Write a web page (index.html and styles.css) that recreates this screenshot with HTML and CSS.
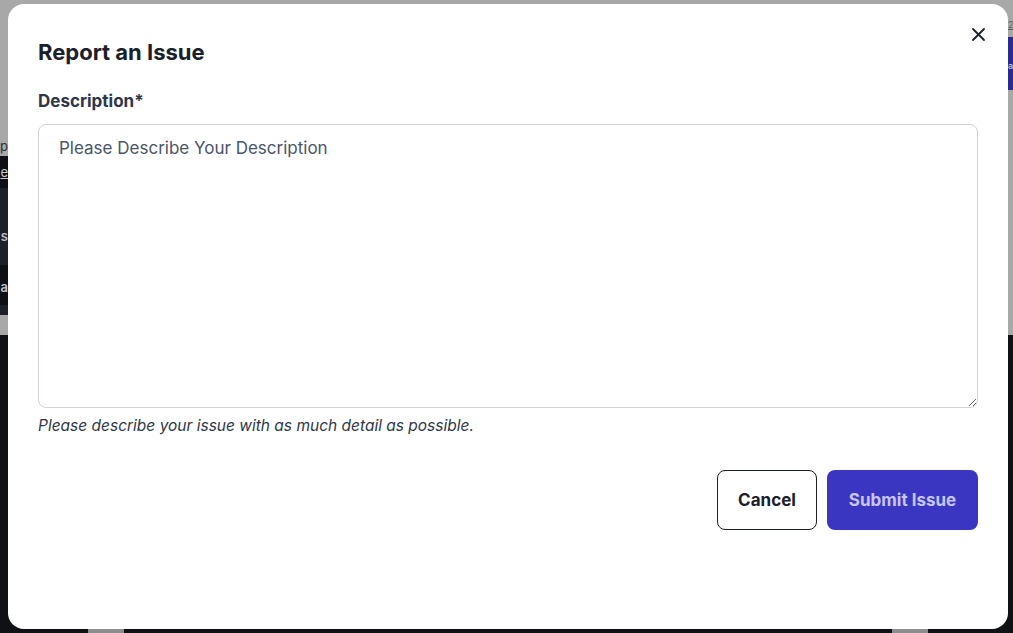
FILE: index.html
```html
<!DOCTYPE html>
<html lang="en">
<head>
  <meta charset="UTF-8">
  <meta name="viewport" content="width=device-width, initial-scale=1.0">
  <title>Report an Issue</title>
  <link rel="stylesheet" href="styles.css">
</head>
<body>
  <div class="page">
    <div class="page-top">
      <div class="edge-left">
        <div class="edge-gray"><span class="edge-text">p</span></div>
        <div class="band band-dark"><span class="edge-text link">e</span></div>
        <div class="band band-mid"><span class="edge-text light">s</span></div>
        <div class="band band-dark tall"><span class="edge-text light">a</span></div>
        <div class="band band-mid thin"></div>
      </div>
      <div class="edge-right">
        <div class="edge-gray-top"><span class="edge-text-r link-dark">2</span></div>
        <div class="band-indigo"><span class="edge-text-r light">a</span></div>
      </div>
    </div>
    <div class="page-bottom">
      <div class="bottom-strip">
        <span class="strip-bar"></span>
        <span class="strip-bar"></span>
      </div>
    </div>
  </div>

  <div class="modal">
    <button class="close-btn" type="button" aria-label="Close">
      <svg width="13" height="13" viewBox="0 0 13 13" fill="none" stroke="#1a202c" stroke-width="1.8" stroke-linecap="round">
        <path d="M1 1 L12 12 M12 1 L1 12"/>
      </svg>
    </button>

    <h2 class="modal-title">Report an Issue</h2>

    <form class="issue-form">
      <label for="description">Description*</label>
      <textarea id="description" placeholder="Please Describe Your Description"></textarea>
      <p class="hint">Please describe your issue with as much detail as possible.</p>

      <div class="actions">
        <button type="button" class="btn btn-cancel">Cancel</button>
        <button type="submit" class="btn btn-submit">Submit Issue</button>
      </div>
    </form>
  </div>
</body>
</html>
```

FILE: styles.css
```css
* {
  box-sizing: border-box;
}
body {
  margin: 0;
  font-family: Inter, "Noto Sans", "Liberation Sans", sans-serif;
  background: #0f1115;
  overflow: hidden;
}

/* dimmed page behind the dialog */
.page {
  height: 633px;
  display: flex;
  flex-direction: column;
}
.page-top {
  height: 335px;
  background: #a8a8a8;
  display: flex;
  justify-content: space-between;
}
.page-bottom {
  flex: 1;
  background: #0f1115;
  display: flex;
  align-items: flex-end;
}
.bottom-strip {
  width: 100%;
  height: 4px;
  display: flex;
  justify-content: space-between;
  padding: 0 85px 0 88px;
}
.strip-bar {
  width: 36px;
  height: 4px;
  background: #8e8e8e;
}
.edge-left {
  width: 8px;
  display: flex;
  flex-direction: column;
  overflow: hidden;
}
.edge-gray {
  height: 156px;
  display: flex;
  align-items: flex-end;
  justify-content: flex-end;
  padding-bottom: 2px;
}
.band {
  display: flex;
  align-items: center;
  justify-content: flex-end;
  height: 32px;
}
.band-dark {
  background: #0e1016;
}
.band-mid {
  background: #1d2029;
  height: 77px;
  padding-top: 18px;
}
.band-dark.tall {
  height: 40px;
  padding-top: 4px;
}
.band-mid.thin {
  height: 10px;
  padding: 0;
}
.edge-text {
  font-size: 13px;
  color: #2f2f2f;
  white-space: nowrap;
}
.edge-text.link {
  color: #c9c9c9;
  text-decoration: underline;
}
.edge-text.light {
  color: #bfbfc6;
  font-weight: 600;
}
.edge-right {
  width: 5px;
  overflow: hidden;
  display: flex;
  flex-direction: column;
}
.edge-gray-top {
  height: 37px;
  padding-top: 12px;
}
.edge-text-r {
  font-size: 9px;
  white-space: nowrap;
}
.edge-text-r.link-dark {
  color: #5a5a5a;
  text-decoration: underline;
}
.edge-text-r.light {
  color: #bfbfc6;
  font-weight: 600;
}
.band-indigo {
  height: 53px;
  background: #2b2a91;
  padding-top: 16px;
}

/* dialog */
.modal {
  position: absolute;
  top: 4px;
  left: 8px;
  width: 1000px;
  height: 625px;
  background: #fff;
  border-radius: 16px;
  padding: 35px 30px 0;
}
.close-btn {
  position: absolute;
  top: 20px;
  right: 20px;
  width: 20px;
  height: 20px;
  padding: 0;
  border: none;
  background: none;
  display: flex;
  align-items: center;
  justify-content: center;
  cursor: pointer;
}
.modal-title {
  margin: 0;
  font-size: 22px;
  line-height: 26px;
  font-weight: 700;
  color: #1a202c;
}
.issue-form {
  margin-top: 26px;
  display: flex;
  flex-direction: column;
}
label {
  font-size: 17px;
  line-height: 20px;
  font-weight: 700;
  color: #2d3748;
}
textarea {
  margin-top: 13px;
  height: 284px;
  width: 100%;
  padding: 12px 20px;
  border: 1px solid #cfd4dc;
  border-radius: 8px;
  font-family: inherit;
  font-size: 17px;
  line-height: 22px;
  color: #2d3748;
  resize: vertical;
}
textarea::placeholder {
  color: #4a5568;
}
.hint {
  margin: 9px 0 0;
  font-size: 15.5px;
  line-height: 18px;
  font-style: italic;
  color: #2d3748;
}
.actions {
  margin-top: 35px;
  display: flex;
  justify-content: flex-end;
  gap: 10px;
}
.btn {
  height: 60px;
  border-radius: 8px;
  font-family: inherit;
  font-size: 17px;
  font-weight: 700;
  cursor: pointer;
}
.btn-cancel {
  width: 100px;
  background: #fff;
  border: 1px solid #1a202c;
  color: #1a202c;
}
.btn-submit {
  width: 151px;
  background: #3b36c2;
  border: none;
  color: #c6c5f4;
}
```
